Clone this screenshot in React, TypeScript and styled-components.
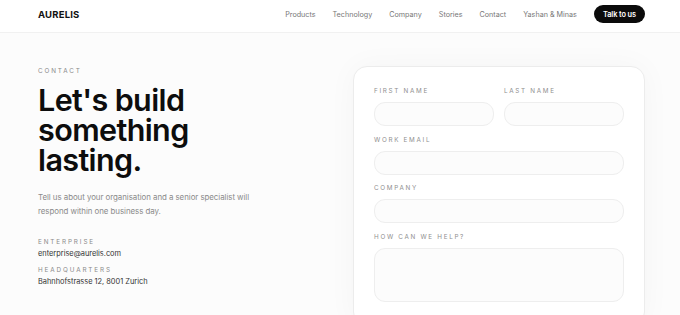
import React from "react";
import styled, { createGlobalStyle } from "styled-components";

const GlobalStyle = createGlobalStyle`
  html, body { margin: 0; padding: 0; }
  body {
    background: #fcfcfc;
    font-family: Inter, "Noto Sans", sans-serif;
    color: #111;
    -webkit-font-smoothing: antialiased;
    overflow: hidden;
  }
  * { box-sizing: border-box; }
`;

const Header = styled.header`
  height: 33px;
  display: flex;
  align-items: center;
  justify-content: space-between;
  padding: 0 35px 4px 38px;
  background: #fff;
  border-bottom: 1px solid #f1f1f1;
`;

const Logo = styled.div`
  font-size: 9.5px;
  font-weight: 700;
  letter-spacing: 0.2px;
  color: #111;
`;

const Nav = styled.nav`
  display: flex;
  align-items: center;
  gap: 17px;
`;

const NavLink = styled.a`
  font-size: 7.2px;
  color: #777;
  text-decoration: none;
`;

const CTA = styled.button`
  height: 18px;
  padding: 0 9px;
  border: none;
  border-radius: 9px;
  background: #0b0b0b;
  color: #fff;
  font-family: inherit;
  font-size: 7.4px;
  font-weight: 600;
  letter-spacing: -0.1px;
`;

const Main = styled.main`
  display: grid;
  grid-template-columns: 1fr 292px;
  padding: 33px 35px 0 38px;
  column-gap: 20px;
`;

const Left = styled.section`
  display: flex;
  flex-direction: column;
  padding-top: 1px;
`;

const Eyebrow = styled.div<{ $mt?: number }>`
  font-size: 6.3px;
  letter-spacing: 1.9px;
  color: #8a8a8a;
  line-height: 8px;
  margin-top: ${(p) => p.$mt ?? 0}px;
`;

const Headline = styled.h1`
  margin: 10px 0 0;
  font-size: 30.5px;
  line-height: 30px;
  font-weight: 600;
  letter-spacing: -0.6px;
  color: #0d0d0d;
`;

const Lead = styled.p`
  margin: 16px 0 0;
  font-size: 7.9px;
  line-height: 13.5px;
  letter-spacing: -0.05px;
  color: #8a8a8a;
  max-width: 225px;
`;

const InfoBlock = styled.div`
  margin-top: 20px;
  display: flex;
  flex-direction: column;
`;

const InfoValue = styled.div`
  margin-top: 3px;
  font-size: 7.4px;
  color: #333;
  line-height: 10px;
`;

const Card = styled.section`
  background: #fff;
  border: 1px solid #ececec;
  border-radius: 14px;
  box-shadow: 0 0 30px rgba(0, 0, 0, 0.035);
  padding: 20px 20px 20px;
  display: flex;
  flex-direction: column;
  gap: 9.5px;
  min-height: 260px;
  min-width: 0;
`;

const Row = styled.div`
  display: grid;
  grid-template-columns: 1fr 1fr;
  gap: 10px;
`;

const Field = styled.label`
  display: flex;
  flex-direction: column;
  gap: 7px;
  min-width: 0;
`;

const FieldLabel = styled.span`
  font-size: 6.3px;
  letter-spacing: 1.7px;
  color: #8f8f8f;
  line-height: 8px;
`;

const Input = styled.input`
  width: 100%;
  min-width: 0;
  height: 24px;
  border: 1px solid #eeeeee;
  border-radius: 11px;
  background: #fcfcfc;
  font-family: inherit;
  outline: none;
`;

const TextArea = styled.textarea`
  width: 100%;
  height: 54px;
  border: 1px solid #eeeeee;
  border-radius: 11px;
  background: #fcfcfc;
  resize: none;
  font-family: inherit;
  outline: none;
`;

export default function App() {
  return (
    <>
      <GlobalStyle />
      <Header>
        <Logo>AURELIS</Logo>
        <Nav>
          <NavLink>Products</NavLink>
          <NavLink>Technology</NavLink>
          <NavLink>Company</NavLink>
          <NavLink>Stories</NavLink>
          <NavLink>Contact</NavLink>
          <NavLink>Yashan &amp; Minas</NavLink>
          <CTA>Talk to us</CTA>
        </Nav>
      </Header>
      <Main>
        <Left>
          <Eyebrow>CONTACT</Eyebrow>
          <Headline>
            Let's build
            <br />
            something
            <br />
            lasting.
          </Headline>
          <Lead>
            Tell us about your organisation and a senior specialist will respond within one business day.
          </Lead>
          <InfoBlock>
            <Eyebrow>ENTERPRISE</Eyebrow>
            <InfoValue>enterprise@aurelis.com</InfoValue>
            <Eyebrow $mt={7}>HEADQUARTERS</Eyebrow>
            <InfoValue>Bahnhofstrasse 12, 8001 Zurich</InfoValue>
          </InfoBlock>
        </Left>
        <Card>
          <Row>
            <Field>
              <FieldLabel>FIRST NAME</FieldLabel>
              <Input />
            </Field>
            <Field>
              <FieldLabel>LAST NAME</FieldLabel>
              <Input />
            </Field>
          </Row>
          <Field>
            <FieldLabel>WORK EMAIL</FieldLabel>
            <Input />
          </Field>
          <Field>
            <FieldLabel>COMPANY</FieldLabel>
            <Input />
          </Field>
          <Field>
            <FieldLabel>HOW CAN WE HELP?</FieldLabel>
            <TextArea />
          </Field>
        </Card>
      </Main>
    </>
  );
}
